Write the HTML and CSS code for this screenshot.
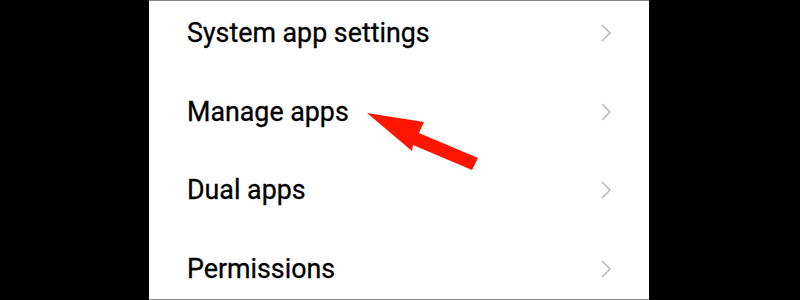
FILE: index.html
```html
<!DOCTYPE html>
<html lang="en">
<head>
    <meta charset="UTF-8">
    <title>Apps settings</title>
    <link rel="stylesheet" href="styles.css">
</head>
<body>

<div class="panel">
    <div class="list">
        <div class="row"><span>System app settings</span><svg class="chev" viewBox="0 0 10 18"><polyline points="1,1 9,9 1,17"/></svg></div>
        <div class="row"><span>Manage apps</span><svg class="chev" viewBox="0 0 10 18"><polyline points="1,1 9,9 1,17"/></svg></div>
        <div class="row"><span>Dual apps</span><svg class="chev" viewBox="0 0 10 18"><polyline points="1,1 9,9 1,17"/></svg></div>
        <div class="row"><span>Permissions</span><svg class="chev" viewBox="0 0 10 18"><polyline points="1,1 9,9 1,17"/></svg></div>
    </div>
    <!-- pointer arrow drawn over the list -->
    <svg class="arrow" viewBox="0 0 500 300">
        <polygon points="218,113 275,122 270,133 329,158 323,170 264,145 263,151"/>
    </svg>
</div>

</body>
</html>
```

FILE: styles.css
```css
body {
    margin: 0;
    background: #000;
    font-family: Roboto, "Liberation Sans", sans-serif;
}
.panel {
    position: relative;
    width: 500px;
    height: 298px;
    margin-left: 149px;
    background: #fff;
    border-top: 1px solid #8a8a8a;
    border-bottom: 1px solid #8a8a8a;
    overflow: hidden;
}
.list {
    margin-top: -7px;
}
.row {
    display: flex;
    align-items: center;
    justify-content: space-between;
    height: 78.6px;
    padding-left: 38px;
    padding-right: 38px;
    font-size: 26.8px;
    color: #000;
    -webkit-text-stroke: 0.3px #000;
}
.chev {
    width: 10px;
    height: 18px;
}
.chev polyline {
    fill: none;
    stroke: #b3b3b3;
    stroke-width: 1.4;
}
.arrow {
    position: absolute;
    left: 0;
    top: -1px;
    width: 500px;
    height: 300px;
}
.arrow polygon {
    fill: #ff1500;
}
```
